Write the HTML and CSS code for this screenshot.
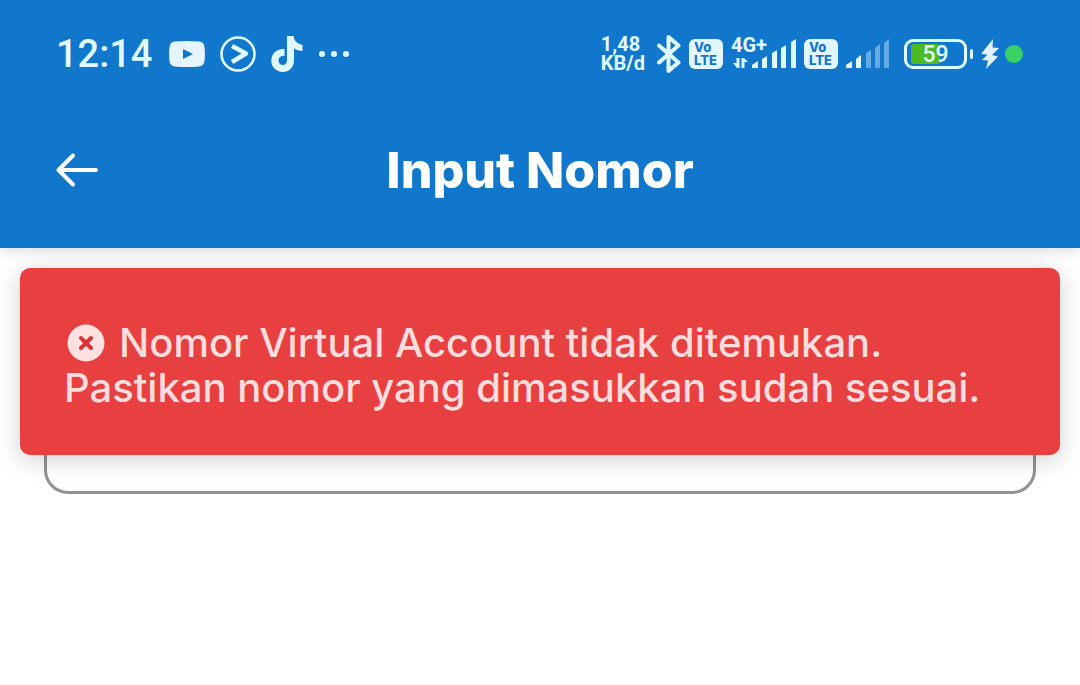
FILE: index.html
```html
<!DOCTYPE html>
<html lang="id">
<head>
<meta charset="utf-8">
<meta name="viewport" content="width=device-width, initial-scale=1">
<title>Input Nomor</title>
<link rel="stylesheet" href="styles.css">
</head>
<body>
<header class="header">
  <div class="status">
    <div class="status-left">
      <time class="clock">12:14</time>
      <svg width="36" height="26" viewBox="0 0 36 26" aria-hidden="true"><path fill="#e6f4ff" fill-rule="evenodd" d="M6 .6Q18-.5 30 .6Q35 1 35.500 6Q36.300 13 35.500 20Q35 25 30 25.400Q18 26.500 6 25.400Q1 25 .5 20Q-.3 13 .5 6Q1 1 6 .6ZM14 8V18L24 13Z"/></svg>
      <svg width="36" height="36" viewBox="0 0 36 36" fill="none" stroke="#e0fbff" aria-hidden="true"><circle cx="18" cy="18" r="16.500" stroke-width="2.600"/><path d="M12 10L26 17.500L12 26" stroke-width="4.400" stroke-linejoin="round"/></svg>
      <svg width="32" height="36" viewBox="0 0 32 36" aria-hidden="true"><path fill="#e0f7ff" d="M16 0H22.500C23 4.800 26.500 8.300 31.500 8.700V14.900C28.200 14.900 25.200 13.900 23 12.200V24.500C23 31.300 18 36 11.800 36C5.300 36 .3 31.200 .3 24.800C.3 17.500 6 12.300 13.500 13V20.100C10 19.200 7.500 21.500 7.500 24.500C7.500 27.200 9.500 29 11.800 29C14.200 29 16 27.200 16 24.500Z"/></svg>
      <svg width="32" height="8" viewBox="0 0 32 8" fill="#e0fbff" aria-hidden="true"><circle cx="4" cy="4" r="3"/><circle cx="16" cy="4" r="3"/><circle cx="28" cy="4" r="3"/></svg>
    </div>
    <div class="status-right">
      <div class="speed"><span>1,48</span><span>KB/d</span></div>
      <svg width="24" height="40" viewBox="0 0 24 40" fill="none" stroke="#e0fbff" stroke-width="4" stroke-linejoin="round" stroke-linecap="round" aria-hidden="true"><path d="M2 11.500L21.500 28.500L11.500 37V3L21.500 11.500L2 28.500"/></svg>
      <div class="volte"><span>Vo</span><span>LTE</span></div>
      <div class="network">
        <span class="network-type">4G+</span>
        <svg width="65" height="30" viewBox="0 0 65 30" fill="#e0fbff" aria-hidden="true"><path d="M5.500 19H8.500V29H6L2 24H5.500ZM10.500 19H13L17 23H13.500V29H10.500ZM21 29V26L27 22V29ZM31 29V20L36 17V29ZM41 29V14L46 11V29ZM50 29V9L55 6V29ZM60 29V3L65 0V29Z"/></svg>
      </div>
      <div class="volte"><span>Vo</span><span>LTE</span></div>
      <svg width="44" height="30" viewBox="0 0 44 30" fill="#e0fbff" aria-hidden="true"><path d="M0 29V26L6 22V29ZM10 29V20L15 16V29Z"/><path opacity=".4" d="M20 29V14L25 11V29ZM29 29V9L34 5V29ZM38 29V4L43 0V29Z"/></svg>
      <div class="power">
        <div class="battery"><span class="battery-level"></span><span class="battery-text">59</span></div>
        <span class="battery-tip"></span>
      </div>
      <div class="charge">
        <svg width="18" height="30" viewBox="0 0 18 30" fill="#e0f2ff" aria-hidden="true"><path d="M12 0L0 15L6.500 15.500L1 21L7 21.500L5 30L17 17.500L11 16L18 9L11.500 8.500Z"/></svg>
        <span class="dot"></span>
      </div>
    </div>
  </div>
  <div class="appbar">
    <button class="back" type="button" aria-label="Kembali">
      <svg width="42" height="34" viewBox="0 0 42 34" fill="none" stroke="#fff" stroke-width="4" stroke-linecap="round" stroke-linejoin="round" aria-hidden="true"><path d="M40 17H2.500M17 2.500L2.500 17L17 31.500"/></svg>
    </button>
    <h1 class="title">Input Nomor</h1>
  </div>
</header>
<main class="content">
  <input class="field" type="text" inputmode="numeric" aria-label="Nomor Virtual Account">
  <div class="toast" role="alert">
    <p class="message"><svg class="error-icon" width="38" height="38" viewBox="0 0 38 38" aria-hidden="true"><circle cx="19" cy="19" r="18.500" fill="#ffe1e2"/><path d="M14 14L24 24M24 14L14 24" stroke="#d93438" stroke-width="4" stroke-linecap="round"/></svg>Nomor Virtual Account tidak ditemukan. Pastikan nomor yang dimasukkan sudah sesuai.</p>
  </div>
</main>
</body>
</html>
```
FILE: styles.css
```css
* {
  box-sizing: border-box;
}

body {
  margin: 0;
  background: #fff;
  font-family: Inter, "Liberation Sans", sans-serif;
}

svg {
  display: block;
  flex: none;
}

.header {
  position: relative;
  padding-bottom: 24px;
  background: #1177cc;
  box-shadow: 0 2px 12px rgba(0, 0, 0, 0.16);
}

.status {
  display: flex;
  align-items: center;
  justify-content: space-between;
  height: 108px;
  padding: 0 57px 0 56px;
  color: #e0fbff;
  font-family: Roboto, sans-serif;
}

.status-left {
  display: flex;
  align-items: center;
  gap: 15px;
}

.clock {
  margin-right: 2px;
  font-size: 38px;
  font-weight: 500;
  line-height: 44px;
}

.status-right {
  display: flex;
  align-items: center;
  gap: 8px;
}

.speed {
  display: grid;
  margin-right: 4px;
  font-size: 20px;
  font-weight: 700;
  line-height: 19px;
}

.volte {
  display: grid;
  align-content: center;
  width: 34px;
  height: 30px;
  padding-left: 5px;
  border-radius: 6px;
  background: #e3f5ff;
  color: #1177cc;
  font-family: Inter, sans-serif;
  font-size: 13px;
  font-weight: 800;
  line-height: 13px;
}

.network {
  position: relative;
}

.network-type {
  position: absolute;
  top: -4px;
  left: 0;
  font-size: 20px;
  font-weight: 700;
  line-height: 20px;
}

.power {
  display: flex;
  align-items: center;
  gap: 3px;
  margin-left: 6px;
}

.battery {
  position: relative;
  width: 63px;
  height: 30px;
  padding: 2px 4px;
  border: 3px solid #e0fbff;
  border-radius: 9px;
}

.battery-level {
  display: block;
  width: 59%;
  height: 100%;
  border-radius: 3px;
  background: #4fba20;
}

.battery-text {
  position: absolute;
  inset: 0;
  font-size: 23px;
  font-weight: 500;
  line-height: 26px;
  text-align: center;
}

.battery-tip {
  width: 3px;
  height: 10px;
  border-radius: 2px;
  background: #e0fbff;
}

.charge {
  display: flex;
  align-items: center;
  gap: 6px;
}

.dot {
  width: 18px;
  height: 18px;
  border-radius: 50%;
  background: #38d364;
}

.appbar {
  display: grid;
  grid-template-columns: 1fr auto 1fr;
  align-items: center;
  height: 116px;
  padding: 8px 56px 0;
}

.back {
  justify-self: start;
  padding: 0;
  border: 0;
  background: none;
  cursor: pointer;
}

.title {
  margin: 0;
  color: #fff;
  font-size: 50px;
  font-weight: 800;
  line-height: 60px;
}

.content {
  position: relative;
  padding: 84px 44px 0;
}

.field {
  display: block;
  width: 100%;
  height: 162px;
  padding: 0 24px;
  border: 3px solid #929292;
  border-radius: 24px;
  background: #fff;
  font: 40px Inter, sans-serif;
}

.toast {
  position: absolute;
  top: 20px;
  right: 20px;
  left: 20px;
  padding: 52px 44px 45px;
  border-radius: 10px;
  background: #e84040;
  box-shadow: 0 4px 24px rgba(0, 0, 0, 0.2);
}

.message {
  margin: 0;
  color: #ffdcdd;
  font-size: 40px;
  font-weight: 500;
  line-height: 45px;
}

.error-icon {
  display: inline-block;
  margin: 0 14px 0 3px;
  vertical-align: -5px;
}
```
